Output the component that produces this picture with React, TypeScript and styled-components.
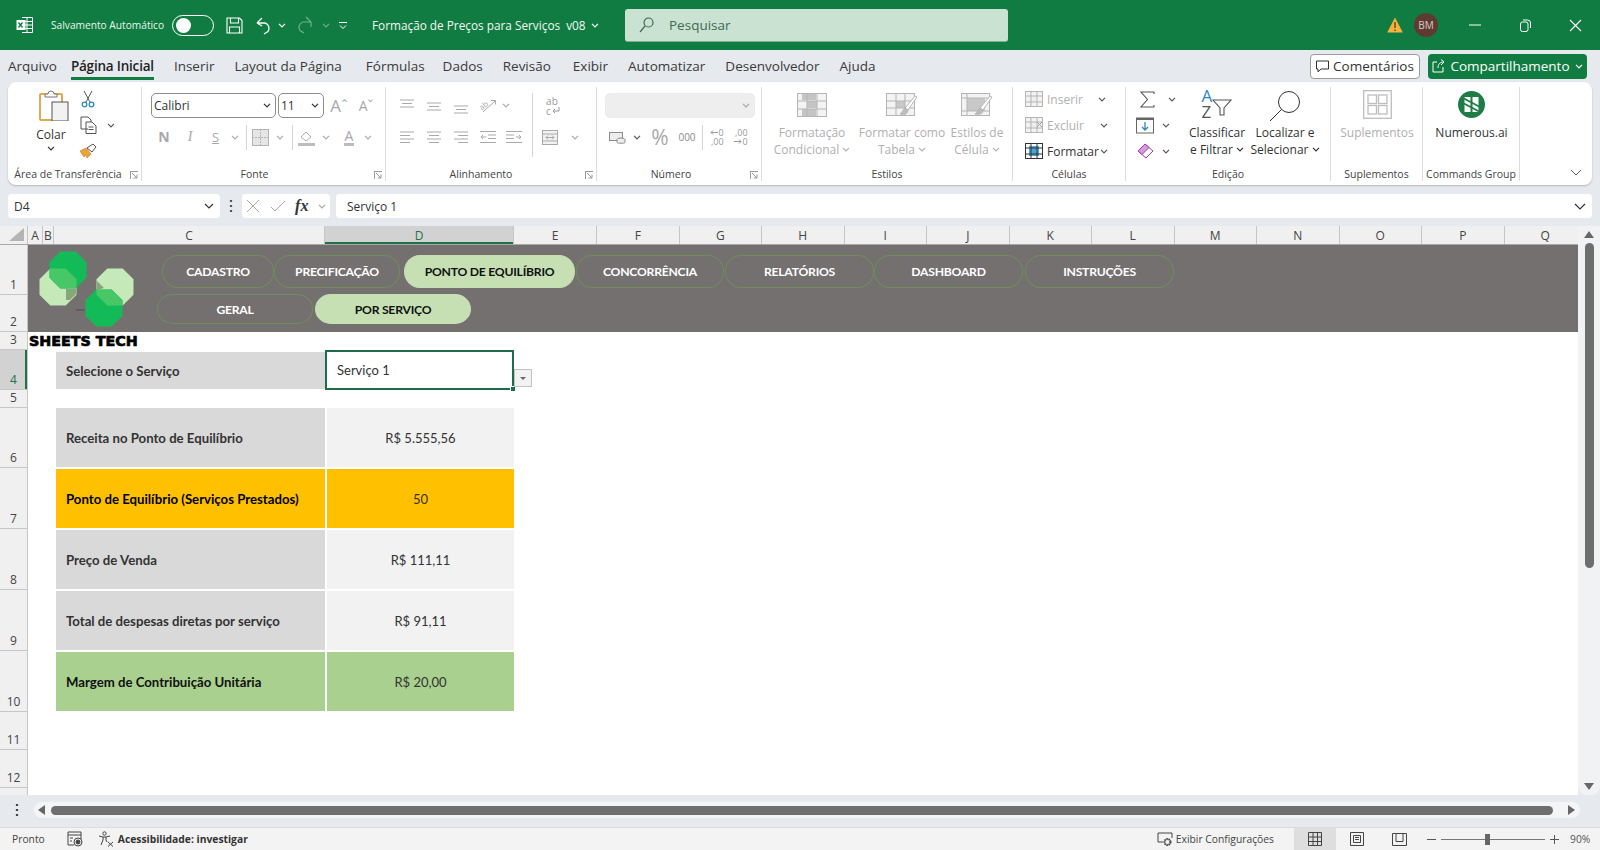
import React from 'react'
import styled, { createGlobalStyle } from 'styled-components'

const UI = `"Open Sans", "Noto Sans", sans-serif`
const CELL = `Lato, "Liberation Sans", sans-serif`

const GlobalStyle = createGlobalStyle`
  html, body { margin: 0; padding: 0; background: #e6e9ed; }
  * { box-sizing: border-box; }
  svg { flex: none; }
`

const Ico: React.FC<{ w: number; h: number; sw?: number; children: React.ReactNode }> = ({ w, h, sw = 1, children }) => (
  <svg width={w} height={h} viewBox={`0 0 ${w} ${h}`} fill="none" stroke="currentColor" strokeWidth={sw}>
    {children}
  </svg>
)

const Chev = () => (
  <Ico w={8} h={5} sw={1.2}>
    <path d="M1 .8l3 3 3-3" />
  </Ico>
)

const Page = styled.div`
  width: 1600px;
  height: 850px;
  overflow: hidden;
  display: flex;
  flex-direction: column;
  background: #e6e9ed;
  font-family: ${UI};
  color: #333;
`

/* title bar */
const TitleBar = styled.header`
  height: 50px;
  flex: none;
  background: #107c41;
  color: #fff;
  display: flex;
  align-items: center;
  padding-left: 16px;
`
const TitleSlot = styled.span<{ $w: number; $dim?: boolean }>`
  width: ${p => p.$w}px;
  flex: none;
  display: flex;
  justify-content: center;
  align-items: center;
  color: ${p => (p.$dim ? '#6fb08c' : '#fff')};
`
const AutoSave = styled.span`
  font-size: 10.2px;
  width: 121px;
  margin-left: 17px;
  flex: none;
  white-space: nowrap;
  color: #eaf4ee;
`
const Toggle = styled.span`
  width: 42px;
  height: 21px;
  flex: none;
  border: 1px solid #fff;
  border-radius: 11px;
  display: flex;
  align-items: center;
  padding-left: 3px;
  &::before {
    content: '';
    width: 15px;
    height: 15px;
    border-radius: 50%;
    background: #fff;
  }
`
const DocTitle = styled.span`
  margin-left: 20px;
  width: 219px;
  flex: none;
  font-size: 11.8px;
  white-space: pre;
  color: #f2f8f4;
`
const SearchBox = styled.div`
  width: 383px;
  height: 33px;
  flex: none;
  margin-left: 26px;
  background: #c9e2d2;
  border-radius: 3px;
  border-bottom: 1px solid #7fae93;
  display: flex;
  align-items: center;
  gap: 15px;
  padding-left: 14px;
  font-size: 13.5px;
  color: #3f6b50;
`
const TitleRight = styled.div`
  margin-left: auto;
  display: flex;
  align-items: center;
`
const Avatar = styled.span`
  width: 24px;
  height: 24px;
  border-radius: 50%;
  background: #5e3a31;
  color: #d8cbc7;
  font-size: 10px;
  display: flex;
  align-items: center;
  justify-content: center;
  margin: 0 12px 0 11px;
`

/* tabs */
const TabRow = styled.nav`
  height: 32px;
  flex: none;
  display: flex;
  align-items: center;
  padding-left: 8px;
`
const Tab = styled.span<{ $active?: boolean; $mr?: number }>`
  position: relative;
  margin-right: ${p => p.$mr ?? 20}px;
  font-size: 13.5px;
  line-height: 28px;
  white-space: nowrap;
  color: ${p => (p.$active ? '#1f1f1f' : '#3a3a3a')};
  font-weight: ${p => (p.$active ? 600 : 400)};
  letter-spacing: ${p => (p.$active ? '-0.2px' : '0')};
  &::after {
    content: '';
    display: ${p => (p.$active ? 'block' : 'none')};
    position: absolute;
    left: 0;
    right: 0;
    bottom: 0;
    height: 3px;
    background: #107c41;
  }
`
const TabActions = styled.div`
  margin-left: auto;
  display: flex;
  gap: 8px;
  padding-right: 13px;
`
const CommentsBtn = styled.button`
  width: 110px;
  height: 25px;
  border: 1px solid #9b9b9b;
  border-radius: 4px;
  background: #fff;
  color: #333;
  font: 13.5px ${UI};
  display: flex;
  align-items: center;
  justify-content: center;
  gap: 4px;
  padding: 0;
`
const ShareBtn = styled(CommentsBtn)`
  width: 159px;
  border: none;
  background: #107c41;
  color: #fff;
  gap: 5px;
`

/* ribbon */
const Ribbon = styled.section`
  height: 103px;
  flex: none;
  margin: 0 8px;
  padding: 5px 0 4px;
  background: #fff;
  border-radius: 8px;
  box-shadow: 0 1px 2px rgba(0, 0, 0, 0.22);
  display: flex;
  position: relative;
`
const Group = styled.div<{ $w: number }>`
  width: ${p => p.$w}px;
  flex: none;
  border-right: 1px solid #dcdcdc;
  display: flex;
  flex-direction: column;
  position: relative;
`
const GroupBody = styled.div`
  flex: 1;
  display: flex;
  min-height: 0;
`
const GroupColumn = styled.div<{ $pl?: number; $w?: number }>`
  ${p => (p.$w ? `width: ${p.$w}px; flex: none;` : 'flex: 1;')}
  display: flex;
  flex-direction: column;
  padding-left: ${p => p.$pl ?? 0}px;
  padding-top: 6px;
`
const VRule = styled.span`
  width: 1px;
  height: 64px;
  margin-top: 6px;
  flex: none;
  background: #d6d6d6;
`
const GroupLabel = styled.div<{ $pr?: number }>`
  height: 13px;
  flex: none;
  font-size: 10.5px;
  line-height: 13px;
  text-align: center;
  padding-right: ${p => p.$pr ?? 0}px;
  color: #444;
  white-space: nowrap;
`
const Launcher = styled.span`
  position: absolute;
  right: 3px;
  bottom: 2px;
  width: 8px;
  height: 8px;
  border-left: 1px solid #9a9a9a;
  border-top: 1px solid #9a9a9a;
  color: #9a9a9a;
  line-height: 0;
`
const Row = styled.div<{ $h?: number; $mt?: number }>`
  display: flex;
  align-items: center;
  height: ${p => p.$h ?? 24}px;
  margin-top: ${p => p.$mt ?? 0}px;
  flex: none;
`
const Slot = styled.span<{ $w: number; $dim?: boolean }>`
  width: ${p => p.$w}px;
  flex: none;
  display: flex;
  align-items: center;
  justify-content: center;
  color: ${p => (p.$dim ? '#a9a9a9' : '#555')};
`
const CellIconSlot = styled(Slot)`
  padding-left: 8px;
`
const Divider = styled.span<{ $w: number }>`
  width: ${p => p.$w}px;
  height: 25px;
  flex: none;
  display: flex;
  justify-content: center;
  &::before {
    content: '';
    width: 1px;
    background: #d6d6d6;
  }
`
const PasteColumn = styled.div`
  width: 52px;
  margin-left: 17px;
  padding-top: 3px;
  display: flex;
  flex-direction: column;
  align-items: center;
  font-size: 12px;
  color: #333;
  flex: none;
`
const PasteIconBox = styled.span`
  margin-left: 6px;
  line-height: 0;
`
const PasteLabel = styled.span`
  margin: 5px 0 3px;
  line-height: 17px;
`
const SmallStack = styled.div<{ $w?: number }>`
  display: flex;
  flex-direction: column;
  gap: 2px;
  ${p => (p.$w ? `width: ${p.$w}px; flex: none;` : '')}
`
const Select = styled.div<{ $w: number; $dim?: boolean; $mr?: number }>`
  width: ${p => p.$w}px;
  height: 25px;
  flex: none;
  margin-right: ${p => p.$mr ?? 0}px;
  display: flex;
  align-items: center;
  justify-content: space-between;
  padding: 0 4px 0 2px;
  border: 1px solid ${p => (p.$dim ? '#ececec' : '#8c8c8c')};
  border-radius: 5px;
  background: ${p => (p.$dim ? '#eeeeee' : '#fff')};
  color: ${p => (p.$dim ? '#a5a5a5' : '#333')};
  font: 12px ${UI};
`
const FontGlyph = styled.span<{ $size: number; $bold?: boolean; $italic?: boolean; $under?: boolean; $bar?: boolean }>`
  font-family: ${p => (p.$italic ? `"Liberation Serif", serif` : UI)};
  font-size: ${p => p.$size}px;
  font-weight: ${p => (p.$bold ? 700 : 400)};
  font-style: ${p => (p.$italic ? 'italic' : 'normal')};
  text-decoration: ${p => (p.$under ? 'underline' : 'none')};
  border-bottom: ${p => (p.$bar ? '3px solid #bdbdbd' : 'none')};
  padding: ${p => (p.$bar ? '0 1px' : '0')};
  color: #a9a9a9;
  line-height: 1;
`
const TinyText = styled.span<{ $dim?: boolean }>`
  font-size: 10px;
  color: ${p => (p.$dim ? '#a9a9a9' : '#8a8a8a')};
  line-height: 1;
`
const GlyphStack = styled.span<{ $size: number; $lh: number; $align?: string }>`
  display: flex;
  flex-direction: column;
  align-items: ${p => p.$align ?? 'flex-start'};
  font-size: ${p => p.$size}px;
  line-height: ${p => p.$lh}px;
  color: #999;
`
const GlyphLine = styled.span<{ $color?: string }>`
  display: flex;
  align-items: center;
  height: 1lh;
  color: ${p => p.$color ?? 'inherit'};
`
const SortBox = styled.span`
  display: flex;
  width: 31px;
  color: #555;
`
const SortFunnel = styled.span`
  margin-top: 11px;
  line-height: 0;
`
const BigTool = styled.div<{ $w: number; $dim?: boolean }>`
  width: ${p => p.$w}px;
  flex: none;
  display: flex;
  flex-direction: column;
  align-items: center;
  font-size: 12px;
  line-height: 16.5px;
  text-align: center;
  white-space: nowrap;
  color: ${p => (p.$dim ? '#b0b0b0' : '#333')};
`
const BigIcon = styled.span<{ $top?: number }>`
  height: 38px;
  display: flex;
  align-items: flex-start;
  padding-top: ${p => p.$top ?? 6}px;
`
const BigText = styled.span`
  display: inline-flex;
  align-items: center;
  gap: 3px;
`
const CellsItem = styled.span<{ $dim?: boolean }>`
  display: flex;
  align-items: center;
  font-size: 12px;
  color: ${p => (p.$dim ? '#b0b0b0' : '#333')};
`
const RibbonCollapse = styled.span`
  position: absolute;
  right: 10px;
  bottom: 9px;
  color: #666;
  line-height: 0;
`

/* formula bar */
const FormulaBar = styled.div`
  height: 24px;
  flex: none;
  margin-top: 9px;
  padding: 0 8px;
  display: flex;
  align-items: stretch;
`
const FieldBox = styled.div<{ $w?: number }>`
  ${p => (p.$w ? `width: ${p.$w}px; flex: none;` : 'flex: 1;')}
  background: #fff;
  border-radius: 4px;
  display: flex;
  align-items: center;
  font-size: 12px;
  color: #333;
  padding: 0 6px;
  justify-content: space-between;
`
const FormulaText = styled.span`
  padding-left: 5px;
`
const Dots = styled.span`
  width: 22px;
  flex: none;
  display: flex;
  align-items: center;
  justify-content: center;
  color: #555;
`
const FxBox = styled(FieldBox)`
  margin-right: 6px;
  padding: 0 4px;
  color: #a9a9a9;
`
const FxGlyph = styled.span`
  font: italic 700 16px "Liberation Serif", serif;
  color: #333;
`

/* sheet */
const SheetArea = styled.div`
  margin-top: 8px;
  height: 569px;
  flex: none;
  display: flex;
`
const SheetMain = styled.div`
  width: 1578px;
  flex: none;
  background: #fff;
  display: flex;
  flex-direction: column;
  overflow: hidden;
`
const ColHeaders = styled.div`
  height: 19px;
  flex: none;
  display: flex;
  background: #f0f0f0;
  border-bottom: 1px solid #a8a8a8;
`
const Corner = styled.div`
  width: 28px;
  flex: none;
  display: flex;
  align-items: flex-end;
  justify-content: flex-end;
  padding: 0 3px 3px 0;
  border-right: 1px solid #c6c6c6;
  color: #b4b4b4;
  line-height: 0;
`
const ColHeader = styled.div<{ $w: number; $active?: boolean }>`
  width: ${p => p.$w}px;
  flex: none;
  text-align: center;
  font-size: 12px;
  line-height: 19px;
  border-right: 1px solid #c6c6c6;
  background: ${p => (p.$active ? '#d2d2d2' : 'transparent')};
  color: ${p => (p.$active ? '#217346' : '#444')};
  box-shadow: ${p => (p.$active ? 'inset 0 -2px 0 #217346' : 'none')};
`
const SheetBody = styled.div`
  flex: 1;
  display: flex;
  min-height: 0;
`
const RowHeaders = styled.div`
  width: 28px;
  flex: none;
  background: #f0f0f0;
  border-right: 1px solid #c6c6c6;
`
const RowHeader = styled.div<{ $h: number; $active?: boolean }>`
  height: ${p => p.$h}px;
  display: flex;
  align-items: flex-end;
  justify-content: center;
  padding-bottom: 2px;
  font-size: 12px;
  line-height: 15px;
  border-bottom: 1px solid #c6c6c6;
  background: ${p => (p.$active ? '#d2d2d2' : 'transparent')};
  color: ${p => (p.$active ? '#217346' : '#444')};
  box-shadow: ${p => (p.$active ? 'inset -2px 0 0 #217346' : 'none')};
`
const Cells = styled.div`
  flex: 1;
  min-width: 0;
  display: flex;
  flex-direction: column;
`
const Banner = styled.div`
  height: 87px;
  flex: none;
  background: #757070;
  display: flex;
`
const LogoBox = styled.div`
  width: 129px;
  flex: none;
  line-height: 0;
`
const NavColumn = styled.div`
  display: flex;
  flex-direction: column;
  padding-top: 10px;
  gap: 6px;
`
const NavRow = styled.div`
  display: flex;
`
const Pill = styled.span<{ $w: number; $h: number; $ml?: number; $active?: boolean }>`
  width: ${p => p.$w}px;
  height: ${p => p.$h}px;
  margin-left: ${p => p.$ml ?? 0}px;
  flex: none;
  border-radius: 16px / 50%;
  border: 1px solid ${p => (p.$active ? '#c6e0b4' : '#6d8d5b')};
  background: ${p => (p.$active ? '#c6e0b4' : 'transparent')};
  color: ${p => (p.$active ? '#111' : '#fff')};
  font: 700 12.2px ${CELL};
  letter-spacing: -0.25px;
  display: flex;
  align-items: center;
  justify-content: center;
  white-space: nowrap;
`
const Brand = styled.div`
  height: 18px;
  flex: none;
  font: 800 14.3px "DejaVu Sans", sans-serif;
  line-height: 19px;
  padding-left: 1px;
  color: #000;
  -webkit-text-stroke: 0.7px #000;
`
const SelectorRow = styled.div`
  height: 40px;
  flex: none;
  display: flex;
  margin-left: 28px;
`
const SelectorLabel = styled.div`
  width: 269px;
  height: 37px;
  margin-top: 2px;
  background: #d9d9d9;
  display: flex;
  align-items: center;
  padding-left: 10px;
  font: 700 13.2px ${CELL};
  color: #333;
`
const SelectorCell = styled.div`
  width: 189px;
  border: 2px solid #1f6b4b;
  display: flex;
  align-items: center;
  padding-left: 10px;
  font: 13px ${CELL};
  color: #333;
  position: relative;
`
const FillHandle = styled.span`
  position: absolute;
  right: -4px;
  bottom: -4px;
  width: 6px;
  height: 6px;
  background: #1f6b4b;
  border: 1px solid #fff;
`
const DropButton = styled.span`
  position: absolute;
  left: 187px;
  top: 17px;
  width: 18px;
  height: 18px;
  background: #f2f2f2;
  border: 1px solid #c2c2c2;
  display: flex;
  align-items: center;
  justify-content: center;
  &::before {
    content: '';
    border: 3px solid transparent;
    border-top: 3px solid #666;
    margin-top: 3px;
  }
`
const ResultTable = styled.div`
  margin: 18px 0 0 28px;
  display: grid;
  grid-template-columns: 269px 187px;
  grid-auto-rows: 59px;
  gap: 2px;
`
const Tone = {
  plain: ['#d9d9d9', '#f2f2f2', '#333'],
  gold: ['#ffc000', '#ffc000', '#000'],
  green: ['#a9d08e', '#a9d08e', '#111'],
}
const RowLabel = styled.div<{ $tone: keyof typeof Tone }>`
  background: ${p => Tone[p.$tone][0]};
  color: ${p => Tone[p.$tone][2]};
  display: flex;
  align-items: center;
  padding-left: 10px;
  font: 700 13.2px ${CELL};
  white-space: nowrap;
`
const RowValue = styled.div<{ $tone: keyof typeof Tone }>`
  background: ${p => Tone[p.$tone][1]};
  color: #333;
  display: flex;
  align-items: center;
  justify-content: center;
  font: 13px ${CELL};
`
const VScroll = styled.div`
  width: 22px;
  flex: none;
  padding: 0 2px 0 2px;
  display: flex;
  flex-direction: column;
  align-items: center;
  background: #f0f2f4;
  border-radius: 0 0 8px 8px;
`
const ScrollArrow = styled.span`
  height: 17px;
  flex: none;
  display: flex;
  align-items: center;
  color: #666;
  line-height: 0;
`
const VThumb = styled.span`
  width: 9px;
  height: 325px;
  flex: none;
  background: #6e6e6e;
  border-radius: 5px;
`
const VTrack = styled.span`
  flex: 1;
`
const HScrollRow = styled.div`
  height: 16px;
  flex: none;
  margin-top: 7px;
  display: flex;
  align-items: stretch;
  padding-right: 20px;
`
const SheetDots = styled.span`
  width: 34px;
  flex: none;
  display: flex;
  align-items: center;
  justify-content: center;
  color: #444;
`
const HTrack = styled.div`
  flex: 1;
  background: #f4f5f7;
  border-radius: 8px;
  display: flex;
  align-items: center;
  color: #666;
  padding: 0 5px 0 4px;
  gap: 6px;
`
const HThumb = styled.span`
  flex: 1;
  height: 9px;
  margin-right: 9px;
  background: #6e6e6e;
  border-radius: 5px;
`

/* status bar */
const StatusBar = styled.footer`
  height: 23px;
  flex: none;
  margin-top: 9px;
  background: #f3f3f3;
  border-top: 1px solid #dcdcdc;
  display: flex;
  align-items: center;
  padding-left: 12px;
  font-size: 10.3px;
  color: #444;
`
const StatusIcon = styled.span<{ $ml: number }>`
  margin-left: ${p => p.$ml}px;
  margin-right: 4px;
  line-height: 0;
  display: flex;
`
const A11y = styled.span`
  font-weight: 700;
  color: #333;
`
const StatusRight = styled.div`
  margin-left: auto;
  display: flex;
  align-items: center;
  height: 100%;
`
const SettingsIcon = styled.span`
  margin-right: 3px;
  line-height: 0;
`
const ViewButtons = styled.div`
  margin-left: 20px;
  display: flex;
  height: 100%;
`
const ViewButton = styled.span<{ $active?: boolean }>`
  width: 42px;
  height: 100%;
  display: flex;
  align-items: center;
  justify-content: center;
  background: ${p => (p.$active ? '#dedede' : 'transparent')};
  color: #444;
`
const ZoomGroup = styled.div`
  margin-left: 7px;
  display: flex;
  align-items: center;
  color: #555;
`
const ZoomTrack = styled.span`
  width: 104px;
  height: 1px;
  margin: 0 5px;
  background: #777;
  position: relative;
`
const ZoomThumb = styled.span`
  position: absolute;
  left: 44px;
  top: -5px;
  width: 5px;
  height: 11px;
  background: #666;
`
const ZoomValue = styled.span`
  width: 41px;
  padding-left: 11px;
`

/* drawings */
const Octagon = (cx: number, cy: number, r = 20) =>
  Array.from({ length: 8 }, (_, i) => {
    const a = Math.PI / 8 + (i * Math.PI) / 4
    return `${(cx + r * Math.cos(a)).toFixed(1)},${(cy + r * Math.sin(a)).toFixed(1)}`
  }).join(' ')

const Logo = () => (
  <svg width={129} height={87} viewBox="0 0 129 87">
    <defs>
      <clipPath id="lightA">
        <polygon points={Octagon(30, 42)} />
      </clipPath>
      <clipPath id="lightB">
        <polygon points={Octagon(87, 42)} />
      </clipPath>
    </defs>
    <path d="M48 65h9" stroke="#4c4c4c" />
    <polygon points={Octagon(30, 42)} fill="#c6e9b9" />
    <polygon points={Octagon(87, 42)} fill="#c6e9b9" />
    <polygon points={Octagon(40, 25)} fill="#12bb58" />
    <polygon points={Octagon(76, 63)} fill="#12bb58" />
    <polygon points={Octagon(40, 25)} fill="#47c766" clipPath="url(#lightA)" />
    <polygon points={Octagon(76, 63)} fill="#47c766" clipPath="url(#lightB)" />
    <polygon points="38,44 48,44 48,49 42,55 38,55" fill="#86a877" />
    <polygon points="69,36 76,43 69,45" fill="#86a877" />
  </svg>
)

const ExcelLogo = () => (
  <Ico w={18} h={18}>
    <path d="M6 1.5h10.5v15H6M6 5.5h10.5M6 9h10.5M6 12.5h10.5M11 1.5v15" />
    <rect x=".5" y="4" width="9" height="10" fill="#fff" stroke="none" />
    <path d="M2.5 6.5l4 5M6.5 6.5l-4 5" stroke="#107c41" strokeWidth="1.3" />
  </Ico>
)
const SaveIcon = () => (
  <Ico w={17} h={17} sw={1.1}>
    <path d="M1 1h12.5l2.500 2.500V16H1zM4.500 1v5h8V1M3.500 16v-6h10v6" />
  </Ico>
)
const UndoIcon = () => (
  <Ico w={16} h={19} sw={1.3}>
    <path d="M1 7h8a5.500 5.500 0 0 1 3 8.500L8 18M1 7l5-5M1 7l5 3" />
  </Ico>
)
const RedoIcon = () => (
  <Ico w={16} h={18} sw={1.2}>
    <path d="M15 6H7a5.500 5.500 0 0 0-3 8.500L8 17M15 6l-5-5M15 6v5" />
  </Ico>
)
const SearchIcon = () => (
  <Ico w={15} h={16} sw={1.2}>
    <circle cx="9.500" cy="5.500" r="4.500" />
    <path d="M6 9l-5 6" />
  </Ico>
)
const WarnIcon = () => (
  <svg width={16} height={16} viewBox="0 0 16 16">
    <path d="M8 .5L15.800 15.500H.2z" fill="#f2b33d" />
    <path d="M8 5v6M8 12.500v1.500" stroke="#5b3b12" strokeWidth="1.300" />
  </svg>
)
const RestoreIcon = () => (
  <Ico w={11} h={13}>
    <rect x=".5" y="3" width="7.500" height="9.500" rx="2" />
    <path d="M3 1h4.500a3 3 0 0 1 3 3v5" />
  </Ico>
)
const CommentIcon = () => (
  <Ico w={13} h={13}>
    <path d="M.5 1h12v8H5l-3 3V9H.5z" />
  </Ico>
)
const ShareIcon = () => (
  <Ico w={13} h={14}>
    <path d="M5 3H1v10h10V8M6 9c0-4 2-6 6-6M12 3L9 .5M12 3L9 6" />
  </Ico>
)
const PasteIcon = () => (
  <svg width={30} height={31} viewBox="0 0 30 31" fill="none">
    <rect x="1" y="4" width="22" height="26" rx="1" stroke="#e2a752" strokeWidth="2" fill="#fff" />
    <path d="M6 7V4h3a3 3 0 0 1 6 0h3v3z" fill="#fff" stroke="#777" />
    <rect x="13" y="12" width="16" height="19" fill="#f2f2f2" stroke="#555" />
  </svg>
)
const ScissorsIcon = () => (
  <svg width={14} height={18} viewBox="0 0 14 18" fill="none" stroke="#555">
    <path d="M3 1l6 11M11 1L5 12" />
    <circle cx="3.500" cy="14.500" r="2.300" stroke="#2e86c1" strokeWidth="1.300" />
    <circle cx="10.500" cy="14.500" r="2.300" stroke="#2e86c1" strokeWidth="1.300" />
  </svg>
)
const CopyIcon = () => (
  <Ico w={17} h={18}>
    <path d="M8 13H1V1h7l3 3v2M6 6h6l4 4v7.500H6z" />
    <path d="M8.500 11h5M8.500 13.500h5" />
  </Ico>
)
const BrushIcon = () => (
  <svg width={18} height={16} viewBox="0 0 18 16" fill="none">
    <path d="M1 8l6-3 5 6-4 4-1-3-2 2z" fill="#eba33c" stroke="#c77a17" strokeWidth=".6" />
    <path d="M8 5l6-4 3 3-4 5z" fill="#fff" stroke="#555" />
  </svg>
)
const BorderIcon = () => (
  <svg width={17} height={17} viewBox="0 0 17 17" fill="#e6e6e6" stroke="#b3b3b3">
    <rect x=".5" y=".5" width="16" height="16" />
    <path d="M8.500 0v17M0 8.500h17" strokeDasharray="2 1" fill="none" />
  </svg>
)
const FillIcon = () => (
  <svg width={17} height={17} viewBox="0 0 17 17" fill="none" stroke="#ababab">
    <path d="M3 8l5-5 5 5-5 4z" />
    <rect x="0" y="14" width="17" height="3" fill="#bdbdbd" stroke="none" />
  </svg>
)
const LinesIcon: React.FC<{ rows: [number, number, number][] }> = ({ rows }) => (
  <Ico w={16} h={16}>
    <path d={rows.map(([a, b, y]) => `M${a} ${y}H${b}`).join('')} />
  </Ico>
)
const IndentIcon: React.FC<{ flip?: boolean }> = ({ flip }) => (
  <Ico w={16} h={14}>
    <g transform={flip ? 'matrix(-1 0 0 1 16 0)' : undefined}>
      <path d="M0 1.500h16M8 5h8M8 8.500h8M0 12.500h16M1 7h5M3 5L1 7l2 2" />
    </g>
  </Ico>
)
const OrientIcon = () => (
  <svg width={21} height={19} viewBox="0 0 21 19" fill="none" stroke="#a9a9a9">
    <path d="M6 16L18 5M14 4.500h4.500v4" />
    <text x="2" y="13" fontSize="8" transform="rotate(-40 6 10)" fill="#a9a9a9" stroke="none" fontFamily="Open Sans">
      ab
    </text>
  </svg>
)
const WrapStack = () => (
  <GlyphStack $size={10} $lh={10}>
    <GlyphLine>ab</GlyphLine>
    <GlyphLine>
      c
      <Ico w={9} h={9}>
        <path d="M8 1v4H2M4 3L2 5l2 2" />
      </Ico>
    </GlyphLine>
  </GlyphStack>
)
const MergeIcon = () => (
  <svg width={16} height={15} viewBox="0 0 16 15" fill="#f2f2f2" stroke="#a9a9a9">
    <rect x=".5" y=".5" width="15" height="14" />
    <path d="M0 4h16M0 11h16M4 7.500h8M6 5.500l-2 2 2 2M10 5.500l2 2-2 2" fill="none" />
  </svg>
)
const CurrencyIcon = () => (
  <svg width={17} height={14} viewBox="0 0 17 14" fill="#eee" stroke="#8c8c8c">
    <rect x=".5" y="2.500" width="13" height="8" />
    <ellipse cx="12" cy="9.500" rx="4" ry="1.500" />
    <path d="M8 9.500v3c0 1 8 1 8 0v-3" />
  </svg>
)
const DecimalMore = () => (
  <GlyphStack $size={9} $lh={9.5} $align="flex-end">
    <GlyphLine>
      <Ico w={8} h={7}>
        <path d="M8 3.500H1M3 1.500l-2 2 2 2" />
      </Ico>
      0
    </GlyphLine>
    <GlyphLine>,00</GlyphLine>
  </GlyphStack>
)
const DecimalLess = () => (
  <GlyphStack $size={9} $lh={9.5} $align="flex-end">
    <GlyphLine>,00</GlyphLine>
    <GlyphLine>
      <Ico w={8} h={7}>
        <path d="M0 3.500h7M5 1.500l2 2-2 2" />
      </Ico>
      0
    </GlyphLine>
  </GlyphStack>
)
const CondIcon = () => (
  <svg width={30} height={24} viewBox="0 0 30 24" fill="#f3f3f3" stroke="#b5b5b5">
    <rect x=".5" y=".5" width="29" height="23" />
    <path d="M5 1h14v6H5zM10 8h10v7H10zM5 16h14v7H5z" fill="#c4c4c4" stroke="none" />
    <path d="M0 8h30M0 16h30M10 0v24M20 0v24" fill="none" />
  </svg>
)
const TableBrushIcon: React.FC<{ cell?: boolean }> = ({ cell }) => (
  <svg width={32} height={25} viewBox="0 0 32 25" fill="#f3f3f3" stroke="#b5b5b5">
    <rect x=".5" y=".5" width="28" height="22" />
    {cell ? (
      <path d="M6 5h18v13H6z" fill="#c8c8c8" stroke="none" />
    ) : (
      <path d="M10 8h9v7h-9z" fill="#c8c8c8" stroke="none" />
    )}
    <path d={cell ? 'M0 5h29M0 18h29M6 0v23' : 'M0 8h29M0 15h29M10 0v23M19 0v23'} fill="none" />
    <path d="M31 4L22 17l-3-2L29 3z" fill="#fff" />
    <path d="M19 15c-2 1-2 4-5 6 4 1 8 0 8-4z" fill="#bdbdbd" />
  </svg>
)
const InsertCellsIcon: React.FC<{ del?: boolean; active?: boolean }> = ({ del, active }) => (
  <svg width={18} height={16} viewBox="0 0 18 16" fill={active ? '#4da6d9' : '#eee'} stroke={active ? '#333' : '#b5b5b5'}>
    <rect x=".5" y=".5" width="17" height="15" fill={active ? '#fff' : '#f3f3f3'} />
    <path d={active ? 'M4 3h10v10H4z' : 'M4 5h8v6H4z'} stroke="none" />
    <path d="M0 5h18M0 11h18M6 0v16M12 0v16" fill="none" />
    {del && <path d="M12 5l5 5M17 5l-5 5" stroke="#9a9a9a" fill="none" />}
  </svg>
)
const SigmaIcon = () => (
  <svg width={15} height={17} viewBox="0 0 15 17" fill="none" stroke="#555" strokeWidth="1.100">
    <path d="M14 3V1H1l6.500 7.500L1 16h13v-2" />
  </svg>
)
const FillDownIcon = () => (
  <svg width={18} height={18} viewBox="0 0 18 18" fill="#fff" stroke="#666">
    <rect x=".5" y="2" width="17" height="15" />
    <path d="M0 2h18v2H0z" fill="#666" stroke="none" />
    <path d="M9 6v8M6 11l3 3 3-3" stroke="#2e86c1" strokeWidth="1.300" fill="none" />
  </svg>
)
const EraserIcon = () => (
  <svg width={17} height={16} viewBox="0 0 17 16" fill="none" stroke="#a33ab3">
    <path d="M1 8l7-7 8 7-7 7z" />
    <path d="M1 8l7-7 4 3.500L5 11.500z" fill="#d99ad9" />
  </svg>
)
const SortFilter = () => (
  <SortBox>
    <GlyphStack $size={17} $lh={15.5}>
      <GlyphLine $color="#2e86c1">A</GlyphLine>
      <GlyphLine $color="#555">Z</GlyphLine>
    </GlyphStack>
    <SortFunnel>
      <Ico w={20} h={17} sw={1.1}>
        <path d="M1 1h18l-7 8v7H8V9z" />
      </Ico>
    </SortFunnel>
  </SortBox>
)
const FindIcon = () => (
  <Ico w={32} h={32}>
    <circle cx="20" cy="12" r="10.500" />
    <path d="M12.500 19.500L1 31" />
  </Ico>
)
const AddinsIcon = () => (
  <svg width={29} height={29} viewBox="0 0 29 29" fill="none" stroke="#bdbdbd" strokeWidth="1.300">
    <rect x=".7" y=".7" width="27.600" height="27.600" />
    <rect x="5" y="5" width="8.500" height="8.500" />
    <rect x="15.500" y="5" width="8.500" height="8.500" />
    <rect x="5" y="15.500" width="8.500" height="8.500" />
    <rect x="15.500" y="15.500" width="8.500" height="8.500" />
  </svg>
)
const NumerousIcon = () => (
  <svg width={27} height={27} viewBox="0 0 27 27">
    <circle cx="13.500" cy="13.500" r="13.500" fill="#1e7c45" />
    <path d="M6.500 6h6v15h-6zM14.500 6h6v15h-6z" fill="#fff" />
    <path d="M5 7l17 9M5 12l17 9" stroke="#1e7c45" strokeWidth="1.800" />
  </svg>
)
const VDots = () => (
  <Ico w={4} h={14}>
    <path d="M2 1v2M2 6v2M2 11v2" strokeWidth="2.200" />
  </Ico>
)
const MacroIcon = () => (
  <svg width={16} height={16} viewBox="0 0 16 16" fill="none" stroke="#444">
    <path d="M14 8V1H1v13h6M1 4h13M3 7h3M3 10h2" />
    <circle cx="11" cy="11" r="4" />
    <circle cx="11" cy="11" r="2" fill="#444" />
  </svg>
)
const PersonIcon = () => (
  <svg width={16} height={16} viewBox="0 0 16 16" fill="none" stroke="#444">
    <circle cx="6.500" cy="2.500" r="1.700" />
    <path d="M1 5l4 1h3l4-1M5 6v3l-2 5M8 6v3l1 2" />
    <path d="M10 11l5 4.500M15 11l-5 4.500" />
  </svg>
)
const DisplayGearIcon = () => (
  <svg width={16} height={15} viewBox="0 0 16 15" fill="none" stroke="#444">
    <path d="M1 10V1h14v5M1 10h5" />
    <circle cx="10.500" cy="10" r="3" strokeWidth="2" strokeDasharray="1.500 .6" />
  </svg>
)
const GridViewIcon = () => (
  <Ico w={14} h={14}>
    <path d="M.5.5h13v13H.5zM.5 5h13M.5 9.500h13M5 .5v13M9.500.5v13" />
  </Ico>
)
const PageViewIcon = () => (
  <Ico w={14} h={14}>
    <path d="M.5.5h13v13H.5zM3.500 3.500h7v7h-7zM5 5.500h4M5 7.500h4" />
  </Ico>
)
const BreakViewIcon = () => (
  <Ico w={15} h={13}>
    <path d="M.5.5h14v12H.5zM4 .5v8h7v-8" />
  </Ico>
)
const Launch: React.FC = () => (
  <Launcher>
    <Ico w={7} h={7}>
      <path d="M1 1l5 5M6 2.500V6H2.500" />
    </Ico>
  </Launcher>
)

const columns: [string, number, boolean?][] = [
  ['A', 15],
  ['B', 11],
  ['C', 271],
  ['D', 189, true],
  ['E', 83],
  ...'FGHIJKLMNOPQ'.split('').map(c => [c, 82.5] as [string, number]),
]
const rows: [string, number][] = [
  ['1', 50],
  ['2', 37],
  ['3', 18],
  ['4', 40],
  ['5', 18],
  ['6', 60],
  ['7', 61],
  ['8', 61],
  ['9', 61],
  ['10', 61],
  ['11', 38],
  ['12', 38],
]
const tabs: [string, number?][] = [
  ['Inserir'],
  ['Layout da Página', 24],
  ['Fórmulas', 18],
  ['Dados'],
  ['Revisão', 22],
  ['Exibir'],
  ['Automatizar'],
  ['Desenvolvedor'],
  ['Ajuda'],
]
const topNav = [
  { label: 'CADASTRO', w: 112, ml: 5 },
  { label: 'PRECIFICAÇÃO', w: 126 },
  { label: 'PONTO DE EQUILÍBRIO', w: 171, ml: 4, active: true },
  { label: 'CONCORRÊNCIA', w: 148, ml: 1 },
  { label: 'RELATÓRIOS', w: 149, ml: 1 },
  { label: 'DASHBOARD', w: 149 },
  { label: 'INSTRUÇÕES', w: 149, ml: 2 },
]
const results: { label: string; value: string; tone: keyof typeof Tone }[] = [
  { label: 'Receita no Ponto de Equilíbrio', value: 'R$ 5.555,56', tone: 'plain' },
  { label: 'Ponto de Equilíbrio (Serviços Prestados)', value: '50', tone: 'gold' },
  { label: 'Preço de Venda', value: 'R$ 111,11', tone: 'plain' },
  { label: 'Total de despesas diretas por serviço', value: 'R$ 91,11', tone: 'plain' },
  { label: 'Margem de Contribuição Unitária', value: 'R$ 20,00', tone: 'green' },
]

const App: React.FC = () => (
  <Page>
    <GlobalStyle />
    <TitleBar>
      <ExcelLogo />
      <AutoSave>Salvamento Automático</AutoSave>
      <Toggle />
      <TitleSlot $w={40}>
        <SaveIcon />
      </TitleSlot>
      <TitleSlot $w={20}>
        <UndoIcon />
      </TitleSlot>
      <TitleSlot $w={16}>
        <Chev />
      </TitleSlot>
      <TitleSlot $w={28} $dim>
        <RedoIcon />
      </TitleSlot>
      <TitleSlot $w={16} $dim>
        <Chev />
      </TitleSlot>
      <TitleSlot $w={18}>
        <Ico w={8} h={7}>
          <path d="M0 .5h8M1 3.500l3 3 3-3" />
        </Ico>
      </TitleSlot>
      <DocTitle>Formação de Preços para Serviços  v08</DocTitle>
      <Chev />
      <SearchBox>
        <SearchIcon />
        Pesquisar
      </SearchBox>
      <TitleRight>
        <WarnIcon />
        <Avatar>BM</Avatar>
        <TitleSlot $w={50}>
          <Ico w={12} h={2}>
            <path d="M0 1h12" />
          </Ico>
        </TitleSlot>
        <TitleSlot $w={50}>
          <RestoreIcon />
        </TitleSlot>
        <TitleSlot $w={50}>
          <Ico w={13} h={13} sw={1.1}>
            <path d="M1 1l11 11M12 1L1 12" />
          </Ico>
        </TitleSlot>
      </TitleRight>
    </TitleBar>

    <TabRow>
      <Tab $mr={14}>Arquivo</Tab>
      <Tab $active>Página Inicial</Tab>
      {tabs.map(([t, mr]) => (
        <Tab key={t} $mr={mr}>
          {t}
        </Tab>
      ))}
      <TabActions>
        <CommentsBtn>
          <CommentIcon />
          Comentários
        </CommentsBtn>
        <ShareBtn>
          <ShareIcon />
          Compartilhamento
          <Chev />
        </ShareBtn>
      </TabActions>
    </TabRow>

    <Ribbon>
      <Group $w={134}>
        <GroupBody>
          <PasteColumn>
            <PasteIconBox>
              <PasteIcon />
            </PasteIconBox>
            <PasteLabel>Colar</PasteLabel>
            <Chev />
          </PasteColumn>
          <SmallStack>
            <Row>
              <Slot $w={22}>
                <ScissorsIcon />
              </Slot>
            </Row>
            <Row>
              <Slot $w={22}>
                <CopyIcon />
              </Slot>
              <Slot $w={24}>
                <Chev />
              </Slot>
            </Row>
            <Row>
              <Slot $w={22}>
                <BrushIcon />
              </Slot>
            </Row>
          </SmallStack>
        </GroupBody>
        <GroupLabel $pr={13}>Área de Transferência</GroupLabel>
        <Launch />
      </Group>

      <Group $w={244}>
        <GroupBody>
          <GroupColumn $pl={9}>
            <Row $h={25}>
              <Select $w={125} $mr={2}>
                Calibri
                <Chev />
              </Select>
              <Select $w={46}>
                11
                <Chev />
              </Select>
              <Slot $w={30} $dim>
                <FontGlyph $size={17}>Aˆ</FontGlyph>
              </Slot>
              <Slot $w={24} $dim>
                <FontGlyph $size={14}>Aˇ</FontGlyph>
              </Slot>
            </Row>
            <Row $mt={7}>
              <Slot $w={26}>
                <FontGlyph $size={14} $bold>
                  N
                </FontGlyph>
              </Slot>
              <Slot $w={26}>
                <FontGlyph $size={14} $italic>
                  I
                </FontGlyph>
              </Slot>
              <Slot $w={25}>
                <FontGlyph $size={13} $under>
                  S
                </FontGlyph>
              </Slot>
              <Slot $w={14} $dim>
                <Chev />
              </Slot>
              <Divider $w={8} />
              <Slot $w={20}>
                <BorderIcon />
              </Slot>
              <Slot $w={20} $dim>
                <Chev />
              </Slot>
              <Divider $w={4} />
              <Slot $w={24}>
                <FillIcon />
              </Slot>
              <Slot $w={16} $dim>
                <Chev />
              </Slot>
              <Slot $w={30}>
                <FontGlyph $size={14} $bar>
                  A
                </FontGlyph>
              </Slot>
              <Slot $w={8} $dim>
                <Chev />
              </Slot>
            </Row>
          </GroupColumn>
        </GroupBody>
        <GroupLabel $pr={18}>Fonte</GroupLabel>
        <Launch />
      </Group>

      <Group $w={211}>
        <GroupBody>
          <GroupColumn $pl={8} $w={146}>
            <Row $h={25}>
              <Slot $w={26} $dim>
                <LinesIcon rows={[[1, 15, 2], [3, 13, 5.5], [1, 15, 9]]} />
              </Slot>
              <Slot $w={27} $dim>
                <LinesIcon rows={[[1, 15, 5], [3, 13, 8.5], [1, 15, 12]]} />
              </Slot>
              <Slot $w={27} $dim>
                <LinesIcon rows={[[1, 15, 8], [3, 13, 11.5], [1, 15, 15]]} />
              </Slot>
              <Slot $w={26}>
                <OrientIcon />
              </Slot>
              <Slot $w={12} $dim>
                <Chev />
              </Slot>
            </Row>
            <Row $mt={7}>
              <Slot $w={26} $dim>
                <LinesIcon rows={[[1, 15, 3], [1, 11, 6.5], [1, 15, 10], [1, 11, 13.5]]} />
              </Slot>
              <Slot $w={27} $dim>
                <LinesIcon rows={[[1, 15, 3], [3, 13, 6.5], [1, 15, 10], [3, 13, 13.5]]} />
              </Slot>
              <Slot $w={27} $dim>
                <LinesIcon rows={[[1, 15, 3], [5, 15, 6.5], [1, 15, 10], [5, 15, 13.5]]} />
              </Slot>
              <Slot $w={27} $dim>
                <IndentIcon />
              </Slot>
              <Slot $w={26} $dim>
                <IndentIcon flip />
              </Slot>
            </Row>
          </GroupColumn>
          <VRule />
          <GroupColumn>
            <Row $h={25}>
              <Slot $w={40}>
                <WrapStack />
              </Slot>
            </Row>
            <Row $mt={7}>
              <Slot $w={34}>
                <MergeIcon />
              </Slot>
              <Slot $w={16} $dim>
                <Chev />
              </Slot>
            </Row>
          </GroupColumn>
        </GroupBody>
        <GroupLabel $pr={20}>Alinhamento</GroupLabel>
        <Launch />
      </Group>

      <Group $w={165}>
        <GroupBody>
          <GroupColumn $pl={8}>
            <Row $h={25}>
              <Select $w={150} $dim>
                <span />
                <Chev />
              </Select>
            </Row>
            <Row $mt={7}>
              <Slot $w={24}>
                <CurrencyIcon />
              </Slot>
              <Slot $w={16}>
                <Chev />
              </Slot>
              <Slot $w={30}>
                <FontGlyph $size={21}>%</FontGlyph>
              </Slot>
              <Slot $w={24}>
                <TinyText>000</TinyText>
              </Slot>
              <Divider $w={6} />
              <Slot $w={24}>
                <DecimalMore />
              </Slot>
              <Slot $w={24}>
                <DecimalLess />
              </Slot>
            </Row>
          </GroupColumn>
        </GroupBody>
        <GroupLabel $pr={16}>Número</GroupLabel>
        <Launch />
      </Group>

      <Group $w={251}>
        <GroupBody>
          <BigTool $w={100} $dim>
            <BigIcon>
              <CondIcon />
            </BigIcon>
            Formatação
            <BigText>
              Condicional <Chev />
            </BigText>
          </BigTool>
          <BigTool $w={80} $dim>
            <BigIcon>
              <TableBrushIcon />
            </BigIcon>
            Formatar como
            <BigText>
              Tabela <Chev />
            </BigText>
          </BigTool>
          <BigTool $w={70} $dim>
            <BigIcon>
              <TableBrushIcon cell />
            </BigIcon>
            Estilos de
            <BigText>
              Célula <Chev />
            </BigText>
          </BigTool>
        </GroupBody>
        <GroupLabel>Estilos</GroupLabel>
      </Group>

      <Group $w={113}>
        <GroupBody>
          <SmallStack>
            <Row>
              <CellIconSlot $w={34} $dim>
                <InsertCellsIcon />
              </CellIconSlot>
              <CellsItem $dim>Inserir</CellsItem>
              <Slot $w={38}>
                <Chev />
              </Slot>
            </Row>
            <Row>
              <CellIconSlot $w={34} $dim>
                <InsertCellsIcon del />
              </CellIconSlot>
              <CellsItem $dim>Excluir</CellsItem>
              <Slot $w={40}>
                <Chev />
              </Slot>
            </Row>
            <Row>
              <CellIconSlot $w={34}>
                <InsertCellsIcon active />
              </CellIconSlot>
              <CellsItem>Formatar</CellsItem>
              <Slot $w={11}>
                <Chev />
              </Slot>
            </Row>
          </SmallStack>
        </GroupBody>
        <GroupLabel>Células</GroupLabel>
      </Group>

      <Group $w={205}>
        <GroupBody>
          <SmallStack $w={62}>
            <Row>
              <Slot $w={42}>
                <SigmaIcon />
              </Slot>
              <Slot $w={8}>
                <Chev />
              </Slot>
            </Row>
            <Row>
              <Slot $w={38}>
                <FillDownIcon />
              </Slot>
              <Slot $w={4}>
                <Chev />
              </Slot>
            </Row>
            <Row>
              <Slot $w={38}>
                <EraserIcon />
              </Slot>
              <Slot $w={4}>
                <Chev />
              </Slot>
            </Row>
          </SmallStack>
          <BigTool $w={58}>
            <BigIcon $top={1}>
              <SortFilter />
            </BigIcon>
            Classificar
            <BigText>
              e Filtrar <Chev />
            </BigText>
          </BigTool>
          <BigTool $w={78}>
            <BigIcon $top={3}>
              <FindIcon />
            </BigIcon>
            Localizar e
            <BigText>
              Selecionar <Chev />
            </BigText>
          </BigTool>
        </GroupBody>
        <GroupLabel>Edição</GroupLabel>
      </Group>

      <Group $w={92}>
        <GroupBody>
          <BigTool $w={92} $dim>
            <BigIcon $top={3}>
              <AddinsIcon />
            </BigIcon>
            Suplementos
          </BigTool>
        </GroupBody>
        <GroupLabel>Suplementos</GroupLabel>
      </Group>

      <Group $w={97}>
        <GroupBody>
          <BigTool $w={97}>
            <BigIcon $top={4}>
              <NumerousIcon />
            </BigIcon>
            Numerous.ai
          </BigTool>
        </GroupBody>
        <GroupLabel>Commands Group</GroupLabel>
      </Group>
      <RibbonCollapse>
        <Ico w={12} h={7}>
          <path d="M1 1l5 5 5-5" />
        </Ico>
      </RibbonCollapse>
    </Ribbon>

    <FormulaBar>
      <FieldBox $w={212}>
        D4
        <Ico w={10} h={6} sw={1.2}>
          <path d="M1 1l4 4 4-4" />
        </Ico>
      </FieldBox>
      <Dots>
        <VDots />
      </Dots>
      <FxBox $w={88}>
        <Ico w={14} h={14}>
          <path d="M1 1l12 12M13 1L1 13" />
        </Ico>
        <Ico w={16} h={12}>
          <path d="M1 7l4 4 10-10" />
        </Ico>
        <FxGlyph>fx</FxGlyph>
        <Chev />
      </FxBox>
      <FieldBox>
        <FormulaText>Serviço 1</FormulaText>
        <Ico w={12} h={7} sw={1.2}>
          <path d="M1 1l5 5 5-5" />
        </Ico>
      </FieldBox>
    </FormulaBar>

    <SheetArea>
      <SheetMain>
        <ColHeaders>
          <Corner>
            <svg width={15} height={13} viewBox="0 0 15 13">
              <path d="M15 0v13H0z" fill="currentColor" />
            </svg>
          </Corner>
          {columns.map(([c, w, active]) => (
            <ColHeader key={c} $w={w} $active={active}>
              {c}
            </ColHeader>
          ))}
        </ColHeaders>
        <SheetBody>
          <RowHeaders>
            {rows.map(([r, h]) => (
              <RowHeader key={r} $h={h} $active={r === '4'}>
                {r}
              </RowHeader>
            ))}
          </RowHeaders>
          <Cells>
            <Banner>
              <LogoBox>
                <Logo />
              </LogoBox>
              <NavColumn>
                <NavRow>
                  {topNav.map(n => (
                    <Pill key={n.label} $w={n.w} $h={33} $ml={n.ml} $active={n.active}>
                      {n.label}
                    </Pill>
                  ))}
                </NavRow>
                <NavRow>
                  <Pill $w={156} $h={30}>
                    GERAL
                  </Pill>
                  <Pill $w={156} $h={30} $ml={2} $active>
                    POR SERVIÇO
                  </Pill>
                </NavRow>
              </NavColumn>
            </Banner>
            <Brand>SHEETS TECH</Brand>
            <SelectorRow>
              <SelectorLabel>Selecione o Serviço</SelectorLabel>
              <SelectorCell>
                Serviço 1
                <FillHandle />
                <DropButton />
              </SelectorCell>
            </SelectorRow>
            <ResultTable>
              {results.map(r => (
                <React.Fragment key={r.label}>
                  <RowLabel $tone={r.tone}>{r.label}</RowLabel>
                  <RowValue $tone={r.tone}>{r.value}</RowValue>
                </React.Fragment>
              ))}
            </ResultTable>
          </Cells>
        </SheetBody>
      </SheetMain>
      <VScroll>
        <ScrollArrow>
          <svg width={10} height={7} viewBox="0 0 10 7">
            <path d="M5 0l5 7H0z" fill="currentColor" />
          </svg>
        </ScrollArrow>
        <VThumb />
        <VTrack />
        <ScrollArrow>
          <svg width={10} height={7} viewBox="0 0 10 7">
            <path d="M5 7L0 0h10z" fill="currentColor" />
          </svg>
        </ScrollArrow>
      </VScroll>
    </SheetArea>

    <HScrollRow>
      <SheetDots>
        <VDots />
      </SheetDots>
      <HTrack>
        <svg width={7} height={10} viewBox="0 0 7 10">
          <path d="M0 5l7-5v10z" fill="currentColor" />
        </svg>
        <HThumb />
        <svg width={7} height={10} viewBox="0 0 7 10">
          <path d="M7 5L0 0v10z" fill="currentColor" />
        </svg>
      </HTrack>
    </HScrollRow>

    <StatusBar>
      Pronto
      <StatusIcon $ml={22}>
        <MacroIcon />
      </StatusIcon>
      <StatusIcon $ml={11}>
        <PersonIcon />
      </StatusIcon>
      <A11y>Acessibilidade: investigar</A11y>
      <StatusRight>
        <SettingsIcon>
          <DisplayGearIcon />
        </SettingsIcon>
        Exibir Configurações
        <ViewButtons>
          <ViewButton $active>
            <GridViewIcon />
          </ViewButton>
          <ViewButton>
            <PageViewIcon />
          </ViewButton>
          <ViewButton>
            <BreakViewIcon />
          </ViewButton>
        </ViewButtons>
        <ZoomGroup>
          <Ico w={9} h={1}>
            <path d="M0 .5h9" />
          </Ico>
          <ZoomTrack>
            <ZoomThumb />
          </ZoomTrack>
          <Ico w={9} h={9}>
            <path d="M0 4.500h9M4.500 0v9" />
          </Ico>
          <ZoomValue>90%</ZoomValue>
        </ZoomGroup>
      </StatusRight>
    </StatusBar>
  </Page>
)

export default App
